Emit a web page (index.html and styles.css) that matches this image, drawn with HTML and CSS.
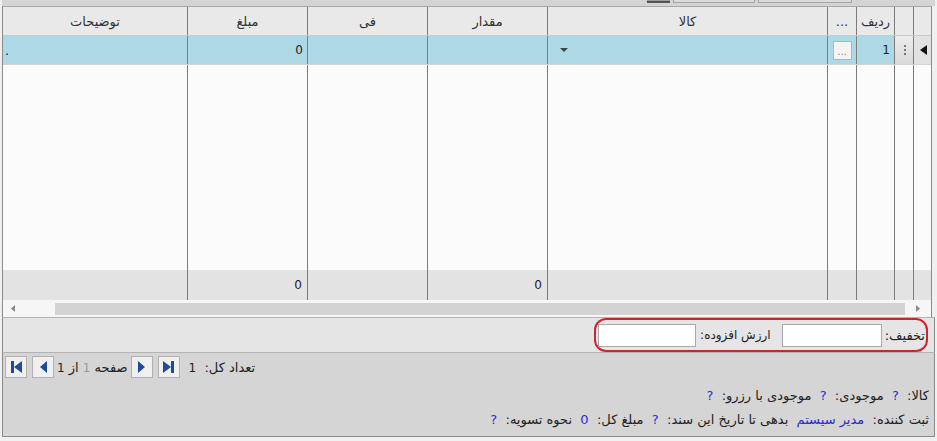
FILE: index.html
```html
<!DOCTYPE html>
<html lang="fa">
<head>
<meta charset="utf-8">
<link rel="stylesheet" href="styles.css">
</head>
<body>
<div class="app">
  <div class="topstrip">
    <span class="tab tab-dark"></span>
    <span class="tab tab-a"></span>
    <span class="tab tab-b"></span>
  </div>
  <div class="grid">
    <div class="row head">
      <div class="c"></div>
      <div class="c"></div>
      <div class="c">ردیف</div>
      <div class="c">...</div>
      <div class="c">کالا</div>
      <div class="c">مقدار</div>
      <div class="c">فی</div>
      <div class="c">مبلغ</div>
      <div class="c">توضیحات</div>
    </div>
    <div class="row data">
      <div class="c rowhead"><svg width="7" height="10" viewBox="0 0 7 10"><polygon points="7,0 0,5 7,10" fill="#111"/></svg></div>
      <div class="c dots"><svg width="3" height="12" viewBox="0 0 3 12"><rect x="1" y="1" width="2" height="2" fill="#777"/><rect x="1" y="5" width="2" height="2" fill="#777"/><rect x="1" y="9" width="2" height="2" fill="#777"/></svg></div>
      <div class="c num">1</div>
      <div class="c btncell"><span class="ell">...</span></div>
      <div class="c combo"><svg width="8" height="4" viewBox="0 0 8 4"><polygon points="0,0 8,0 4,4" fill="#444"/></svg></div>
      <div class="c"></div>
      <div class="c"></div>
      <div class="c num">0</div>
      <div class="c dotl">.</div>
    </div>
    <div class="row empty">
      <div class="c"></div><div class="c"></div><div class="c"></div><div class="c"></div><div class="c"></div><div class="c"></div><div class="c"></div><div class="c"></div><div class="c"></div>
    </div>
    <div class="row foot">
      <div class="c"></div>
      <div class="c"></div>
      <div class="c"></div>
      <div class="c"></div>
      <div class="c"></div>
      <div class="c num">0</div>
      <div class="c"></div>
      <div class="c num">0</div>
      <div class="c"></div>
    </div>
    <div class="hscroll">
      <span class="arr"><svg width="4" height="7" viewBox="0 0 4 7"><polygon points="4,0 0,3.5 4,7" fill="#8a8a8a"/></svg></span>
      <span class="thumb"></span>
      <span class="arr"><svg width="4" height="7" viewBox="0 0 4 7"><polygon points="0,0 4,3.5 0,7" fill="#8a8a8a"/></svg></span>
    </div>
  </div>
  <div class="discount">
    <div class="redbox">
      <span class="lbl">تخفیف:</span>
      <span class="inp inp-a"></span>
      <span class="lbl lbl-vat">ارزش افزوده:</span>
      <span class="inp inp-b"></span>
    </div>
  </div>
  <div class="bottom">
    <div class="pager">
      <span class="pbtn"><svg width="11" height="12" viewBox="0 0 11 12"><rect x="0" y="0" width="3" height="12" fill="#1e4c9c"/><polygon points="11,0 3,6 11,12" fill="#1e4c9c"/></svg></span>
      <span class="pbtn"><svg width="7" height="12" viewBox="0 0 7 12"><polygon points="7,0 0,6 7,12" fill="#1e4c9c"/></svg></span>
      <span class="pgtext" dir="rtl">صفحه <span class="grey">1</span> از <span class="n">1</span></span>
      <span class="pbtn"><svg width="7" height="12" viewBox="0 0 7 12"><polygon points="0,0 7,6 0,12" fill="#1e4c9c"/></svg></span>
      <span class="pbtn"><svg width="11" height="12" viewBox="0 0 11 12"><polygon points="0,0 8,6 0,12" fill="#1e4c9c"/><rect x="8" y="0" width="3" height="12" fill="#1e4c9c"/></svg></span>
      <span class="total" dir="rtl">تعداد کل:&nbsp; <span class="n">1</span></span>
    </div>
    <div class="status" dir="rtl">
      <div class="line">کالا:&nbsp; <span class="v">?</span>&nbsp; موجودی:&nbsp; <span class="v">?</span>&nbsp; موجودی با رزرو:&nbsp; <span class="v">?</span></div>
      <div class="line">ثبت کننده:&nbsp; <span class="v">مدیر سیستم</span>&nbsp; بدهی تا تاریخ این سند:&nbsp; <span class="v">?</span>&nbsp; مبلغ کل:&nbsp; <span class="v">0</span>&nbsp; نحوه تسویه:&nbsp; <span class="v">?</span></div>
    </div>
  </div>
</div>
</body>
</html>
```

FILE: styles.css
```css
* { box-sizing: border-box; }
html, body { margin: 0; padding: 0; }
body {
  width: 937px;
  height: 441px;
  overflow: hidden;
  background: #f0f0f0;
  font-family: "DejaVu Sans", Tahoma, sans-serif;
  font-size: 13px;
  color: #222;
}
.app { margin-left: 2px; width: 933px; }

.topstrip {
  height: 6px;
  background: #d4d4d4;
  display: flex;
  align-items: flex-start;
  padding-left: 645px;
}
.tab { height: 3px; display: block; }
.tab-dark { width: 23px; border-bottom: 2px solid #555; background: #9a9a9a; }
.tab-a { width: 82px; margin-left: 3px; border: 1px solid #a5a5a5; border-top: none; background: #dcdcdc; }
.tab-b { width: 94px; margin-left: 3px; border: 1px solid #a5a5a5; border-top: none; background: #dcdcdc; }

.grid {
  width: 930px;
  border-left: 1px solid #8a8a8a;
  border-right: 1px solid #8a8a8a;
  border-top: 1px solid #a8a8a8;
}
.row {
  display: grid;
  direction: rtl;
  grid-template-columns: 18px 19px 38px 29px 280px 120px 120px 120px 184px;
}
.row > .c { border-left: 1px solid #7c7c7c; display: flex; align-items: center; }
.row > .c:last-child { border-left: none; }

.head { height: 29px; background: #e9e9e9; border-bottom: 1px solid #c9c9c9; color: #333; }
.head > .c { justify-content: center; }

.data { height: 29px; background: #add8e6; border-bottom: 1px solid #d4d4d4; }
.data .rowhead { background: #e2e2e2; justify-content: center; padding-left: 1px; }
.data .dots { background: linear-gradient(#ececec, #d9d9d9); justify-content: center; }
.num { justify-content: flex-start; padding-right: 5px; font-size: 12px; }
.data .num { padding-right: 4px; }
.btncell { justify-content: center; }
.ell {
  width: 19px; height: 19px;
  background: #f4f4f4;
  border: 1px solid #b4b4b4;
  color: #8a8a8a;
  font-size: 10px;
  line-height: 19px;
  text-align: center;
  direction: ltr;
}
.combo { justify-content: flex-end; padding-left: 12px; }
.dotl { justify-content: flex-end; padding-left: 2px; }

.empty { height: 205px; background: #fbfbfb; }
.foot { height: 30px; background: #e3e3e3; }

.hscroll {
  height: 17px;
  background: #f6f6f6;
  display: flex;
  align-items: center;
}
.arr { width: 20px; display: flex; justify-content: center; }
.hscroll .arr:first-child { width: 52px; justify-content: flex-start; padding-left: 8px; }
.thumb { flex: 1; height: 12px; background: #d3d3d3; }
.hscroll .arr:last-child { width: 26px; justify-content: center; }

.discount {
  height: 36px;
  background: #e5e5e5;
  border-top: 1px solid #b3b3b3;
  border-bottom: 1px solid #b3b3b3;
  border-left: 1px solid #8a8a8a;
  border-right: 1px solid #8a8a8a;
  display: flex;
  direction: rtl;
  padding-right: 6px;
}
.redbox {
  width: 334px;
  height: 34px;
  border: 2px solid #cf2330;
  border-radius: 12px;
  display: flex;
  align-items: center;
  padding-right: 1px;
}
.lbl { color: #222; white-space: nowrap; }
.inp { display: block; height: 23px; background: #fff; border: 1px solid #a9a9a9; }
.inp-a { width: 100px; margin-right: 3px; }
.lbl-vat { margin-right: 11px; font-size: 12px; }
.inp-b { width: 98px; margin-right: 4px; }

.bottom {
  height: 84px;
  background: #d5d5d5;
  border-left: 1px solid #8a8a8a;
  border-right: 1px solid #8a8a8a;
  border-bottom: 1px solid #8a8a8a;
}
.pager {
  display: flex;
  align-items: center;
  padding-top: 3px;
  padding-left: 2px;
  height: 25px;
}
.pbtn {
  width: 22px; height: 22px;
  background: #f0f0f0;
  border: 1px solid #b1b1b1;
  display: flex;
  align-items: center;
  justify-content: center;
  margin-right: 5px;
}
.pgtext { margin-left: -2px; margin-right: 3px; white-space: nowrap; }
.n { font-size: 12px; }
.grey { color: #9a9a9a; font-size: 12px; }
.total { margin-left: 4px; white-space: nowrap; }

.status { padding-right: 5px; padding-top: 10px; }
.line { height: 24px; line-height: 16px; white-space: nowrap; }
.v { color: #2b2bd0; }
```
